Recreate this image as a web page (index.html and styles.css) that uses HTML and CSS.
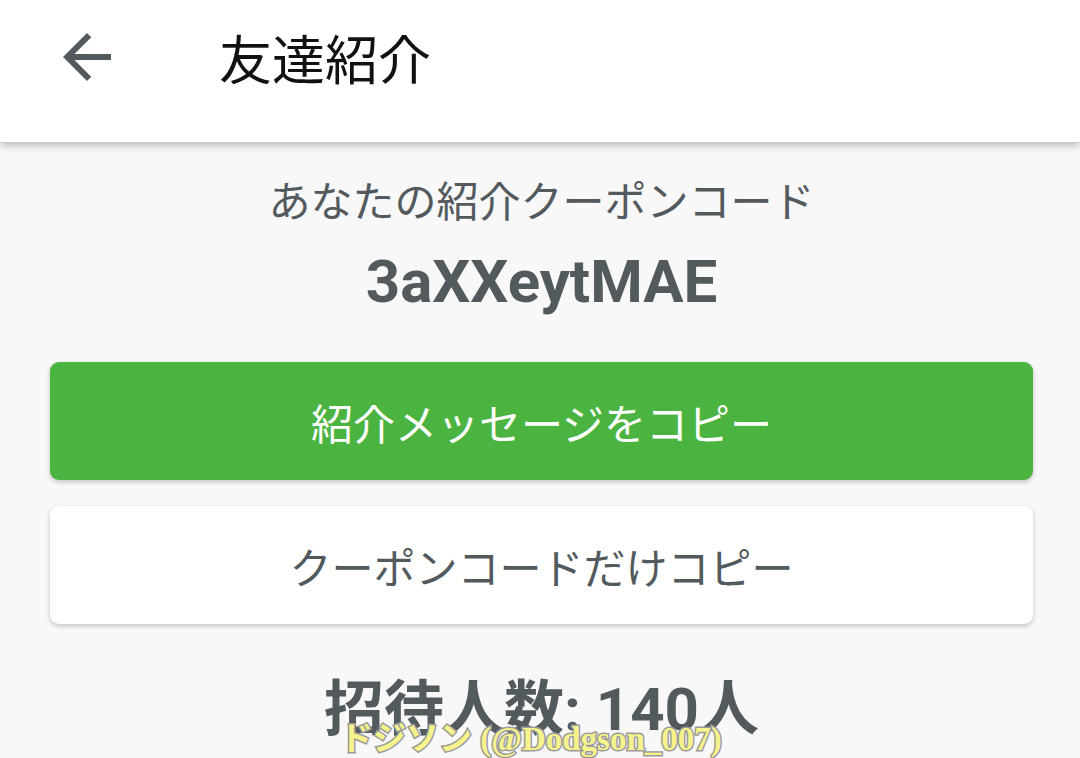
FILE: index.html
```html
<!DOCTYPE html>
<html lang="ja">
<head>
    <meta charset="UTF-8">
    <meta name="viewport" content="width=device-width, initial-scale=1.0">
    <title>友達紹介</title>
    <link rel="stylesheet" href="styles.css">
</head>
<body>
    <!-- ヘッダー -->
    <header class="app-bar">
        <a class="back" href="javascript:;">
            <svg viewBox="0 0 24 24" width="72" height="72">
                <path d="M20 11H7.83l5.59-5.59L12 4l-8 8 8 8 1.41-1.41L7.83 13H20v-2z"/>
            </svg>
        </a>
        <h1 class="title">友達紹介</h1>
    </header>

    <main class="content">
        <p class="label">あなたの紹介クーポンコード</p>
        <p class="code">3aXXeytMAE</p>

        <a class="btn btn-primary" href="javascript:;">紹介メッセージをコピー</a>
        <a class="btn btn-plain" href="javascript:;">クーポンコードだけコピー</a>

        <p class="count">招待人数: 140人</p>

        <!-- 透かし -->
        <span class="watermark">ドジソン (@Dodgson_007)</span>
    </main>
</body>
</html>
```

FILE: styles.css
```css
*{
    margin: 0;
    padding: 0;
    box-sizing: border-box;
}

html, body{
    height: 100%;
}

body{
    font-family: Roboto, "Noto Sans CJK JP", sans-serif;
    background-color: #f8f8f8;
    color: #535a5e;
    overflow: hidden;
}

.app-bar{
    height: 142px;
    background-color: #fff;
    display: flex;
    align-items: center;
    padding: 0 0 28px 51px;
    box-shadow: 0 3px 8px rgba(0, 0, 0, 0.28);
    position: relative;
    z-index: 1;
}

.back{
    display: flex;
    width: 72px;
    height: 72px;
}

.back svg{
    fill: #535a5e;
}

.title{
    margin-left: 96px;
    font-family: "Noto Sans CJK JP", sans-serif;
    font-size: 53px;
    font-weight: 400;
    color: #111;
}

.content{
    position: relative;
    height: calc(100% - 142px);
    padding: 27px 47px 0 50px;
    display: flex;
    flex-direction: column;
    align-items: stretch;
    text-align: center;
}

.label{
    font-size: 42px;
    line-height: 60px;
    font-family: "Noto Sans CJK JP", sans-serif;
}

.code{
    margin-top: 13px;
    font-size: 60px;
    line-height: 80px;
    font-weight: 700;
}

.btn{
    display: flex;
    align-items: center;
    justify-content: center;
    height: 118px;
    border-radius: 9px;
    font-family: "Noto Sans CJK JP", sans-serif;
    font-size: 42px;
    text-decoration: none;
    box-shadow: 0 2px 5px rgba(0, 0, 0, 0.22);
}

.btn-primary{
    margin-top: 40px;
    background-color: #4bb441;
    color: #fff;
}

.btn-plain{
    margin-top: 26px;
    background-color: #fff;
    color: #535a5e;
}

.count{
    margin-top: 46px;
    font-size: 60px;
    line-height: 80px;
    font-weight: 700;
}

.watermark{
    position: absolute;
    left: 340px;
    top: 570px;
    font-family: "Liberation Serif", "Noto Sans CJK JP", serif;
    font-size: 33px;
    font-weight: 700;
    color: #f6f28c;
    -webkit-text-stroke: 3px #9a9a9a;
    paint-order: stroke fill;
    white-space: nowrap;
}
```
